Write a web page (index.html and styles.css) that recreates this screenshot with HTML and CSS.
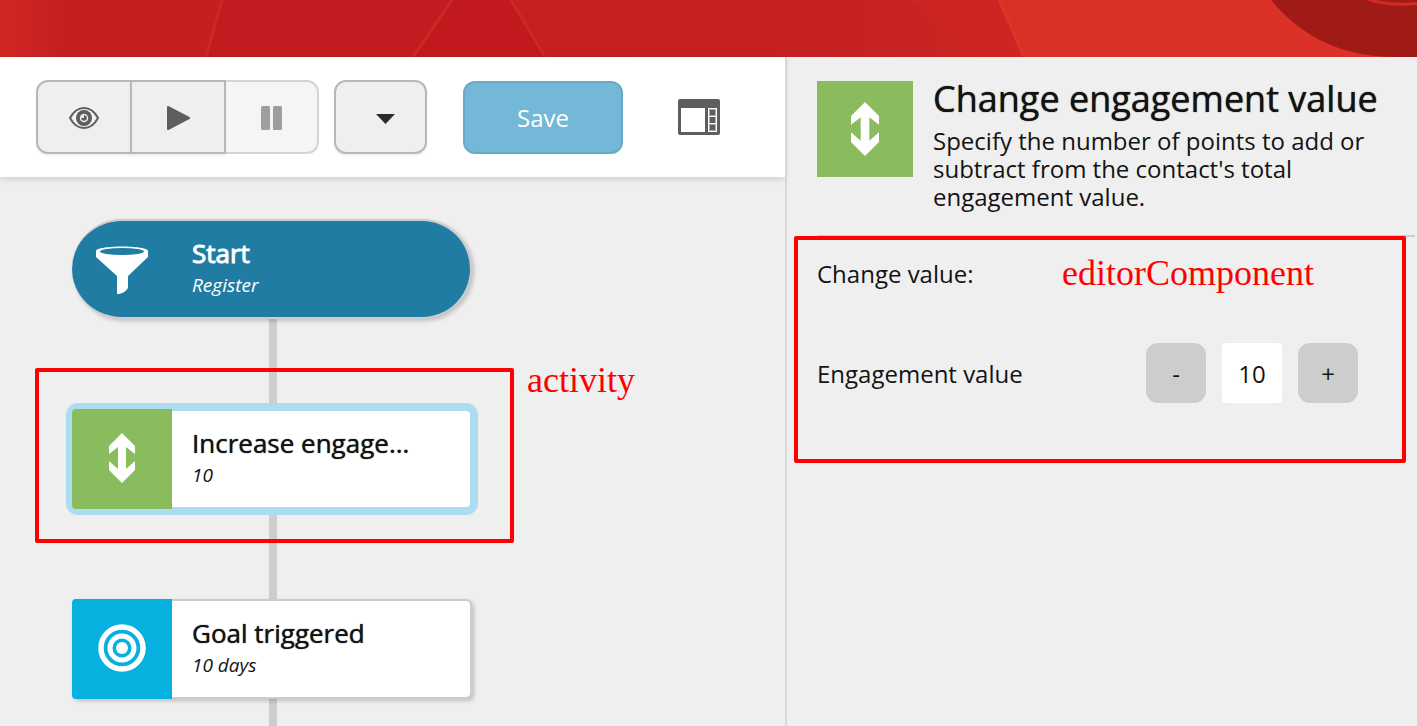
FILE: index.html
```html
<!DOCTYPE html>
<html lang="en">
<head>
<meta charset="utf-8">
<title>Campaign designer</title>
<link rel="stylesheet" href="styles.css">
</head>
<body>
<header class="banner">
  <svg class="banner-art" viewBox="0 0 1417 57" preserveAspectRatio="none" aria-hidden="true">
    <defs>
      <linearGradient id="g1"><stop offset="0" stop-color="#d02724"/><stop offset=".3" stop-color="#c41f20"/><stop offset="1" stop-color="#c42021"/></linearGradient>
      <linearGradient id="g2"><stop offset="0" stop-color="#c51f22"/><stop offset="1" stop-color="#c62021"/></linearGradient>
      <linearGradient id="g3"><stop offset="0" stop-color="#d83127"/><stop offset="1" stop-color="#dd3129"/></linearGradient>
      <linearGradient id="g4"><stop offset="0" stop-color="#c52021"/><stop offset="1" stop-color="#cc2523"/></linearGradient>
    </defs>
    <rect width="1417" height="57" fill="#c41e20"/>
    <path d="M0 0H222L206 57H0z" fill="url(#g1)"/>
    <path d="M222 0H452L413 57H206z" fill="#c31c20"/>
    <path d="M452 0H511L545 57H413z" fill="#c1191e"/>
    <path d="M511 0H1000L1025 57H545z" fill="url(#g2)"/>
    <path d="M800 0H1000L1025 57H811z" fill="url(#g4)"/>
    <path d="M910 0H1000L1025 57H978z" fill="#cc2523"/>
    <path d="M999 0H1417V57H1024z" fill="url(#g3)"/>
    <path d="M222 0L206 57M452 0L413 57M511 0L545 57" fill="none" stroke="#cb2a24" stroke-width="3"/>
    <path d="M999 0L1024 57" stroke="#e33525" stroke-width="2.500"/>
    <path d="M1271 0Q1318 57 1395 57H1417V0z" fill="#a01b15"/>
    <path d="M1366 0Q1387 8 1417 5V0z" fill="#d32a24"/>
    <path d="M1376 0Q1392 4 1417 2V0z" fill="#a01b15"/>
  </svg>
</header>
<div class="workspace">
  <main class="designer">
    <div class="toolbar">
      <div class="button-group">
        <button class="tool" type="button" aria-label="Preview">
          <svg width="30" height="26" viewBox="0 0 30 26"><path d="M1 14C5 6.500 10 4 15 4s10 2.500 14 10c-4 7.500-9 10-14 10S5 21.500 1 14z" fill="#f2f2f2" stroke="#5e5e5e" stroke-width="2"/><circle cx="15" cy="14" r="8" fill="#5e5e5e"/><circle cx="15" cy="14" r="3.500" fill="#5e5e5e" stroke="#e8e8e8" stroke-width="1.500"/><path d="M12 11h3v3h-3z" fill="#e8e8e8"/></svg>
        </button>
        <button class="tool" type="button" aria-label="Start">
          <svg width="24" height="26" viewBox="0 0 24 26"><path d="M2 3L23 14 2 25z" fill="#5e5e5e" stroke="#5e5e5e" stroke-width="2" stroke-linejoin="round"/></svg>
        </button>
        <button class="tool" type="button" aria-label="Pause" disabled>
          <svg width="22" height="26" viewBox="0 0 22 26"><rect y="2" width="9" height="24" rx="1.500" fill="#5e5e5e"/><rect x="12" y="2" width="9" height="24" rx="1.500" fill="#5e5e5e"/></svg>
        </button>
      </div>
      <button class="tool tool-menu" type="button" aria-label="More actions">
        <svg width="20" height="14" viewBox="0 0 20 14"><path d="M0 4H19L9.500 14z" fill="#2b2b2b"/></svg>
      </button>
      <button class="save" type="button">Save</button>
      <button class="toggle" type="button" aria-label="Toggle panel">
        <svg width="42" height="36" viewBox="0 0 42 36"><rect width="42" height="36" rx="2" fill="#5e5e5e"/><path d="M3 9h24v24H3zM30 9h9v24h-9z" fill="#fff"/><path d="M31 10h7v7h-7zM31 18h7v6h-7zM31 25h7v7h-7z" fill="#aaa"/><path d="M32 11h5v5h-5zM32 18h5v6h-5zM32 26h5v5h-5z" fill="#5e5e5e"/></svg>
      </button>
    </div>
    <div class="flow">
      <article class="node node-start">
        <div class="node-icon">
          <svg width="52" height="54" viewBox="0 0 52 54"><path d="M0 9C0 3 52 3 52 9v6L32 34v12q-4 6-11 6V34L0 15z" fill="#fff"/><ellipse cx="26" cy="9.500" rx="22" ry="3.500" fill="#207ca2"/></svg>
        </div>
        <div class="node-text"><h2 class="node-title node-title-strong">Start</h2><p class="node-detail">Register</p></div>
      </article>
      <div class="connector"></div>
      <article class="node node-selected">
        <div class="node-icon node-icon-green">
          <svg width="26" height="52" viewBox="0 0 26 52"><path d="M13 0L26 13V21L17 14V36L26 28V37L13 50 0 37V28L9 36V14L0 21V13z" fill="#fff"/></svg>
        </div>
        <div class="node-text"><h2 class="node-title">Increase engage...</h2><p class="node-detail">10</p></div>
        <div class="callout callout-activity"><span class="callout-label">activity</span></div>
      </article>
      <div class="connector"></div>
      <article class="node">
        <div class="node-icon node-icon-blue">
          <svg width="48" height="50" viewBox="0 0 48 50"><g fill="none" stroke="#fff"><circle cx="24" cy="24" r="21" stroke-width="5.500"/><circle cx="24" cy="24" r="12" stroke-width="5"/></g><circle cx="24" cy="24" r="6" fill="#fff"/></svg>
        </div>
        <div class="node-text"><h2 class="node-title">Goal triggered</h2><p class="node-detail">10 days</p></div>
      </article>
      <div class="connector connector-last"></div>
    </div>
  </main>
  <aside class="panel">
    <div class="panel-head">
      <div class="panel-icon">
        <svg width="28" height="54" viewBox="0 0 26 50"><path d="M13 0L26 13V21L17 14V36L26 28V37L13 50 0 37V28L9 36V14L0 21V13z" fill="#fff"/></svg>
      </div>
      <div class="panel-intro">
        <h1 class="panel-title">Change engagement value</h1>
        <p class="panel-desc">Specify the number of points to add or subtract from the contact's total engagement value.</p>
      </div>
    </div>
    <div class="editor">
      <p class="editor-heading">Change value:</p>
      <div class="editor-row">
        <label class="editor-label" for="points">Engagement value</label>
        <div class="stepper">
          <button class="step" type="button">-</button>
          <input class="step-value" id="points" type="text" value="10">
          <button class="step" type="button">+</button>
        </div>
      </div>
      <div class="callout callout-editor"><span class="callout-label">editorComponent</span></div>
    </div>
  </aside>
</div>
</body>
</html>
```
FILE: styles.css
```css
* { box-sizing: border-box; }
body {
  margin: 0;
  min-height: 100vh;
  display: flex;
  flex-direction: column;
  overflow: hidden;
  background: #efefef;
  color: #131313;
  font-family: "Open Sans", sans-serif;
  font-size: 24px;
}
h1, h2, p { margin: 0; }
button, input { font: inherit; color: inherit; }
svg { display: block; }

.banner { height: 57px; background: #c41e20; }
.banner-art { width: 100%; height: 100%; }

.workspace { flex: 1; display: flex; }
.designer { flex: 1; min-width: 0; }

.toolbar {
  display: flex;
  align-items: center;
  height: 120px;
  padding-left: 36px;
  background: #fff;
  box-shadow: 0 2px 6px rgba(0, 0, 0, .15);
}
.button-group { display: flex; }
.tool {
  display: flex;
  align-items: center;
  justify-content: center;
  width: 96px;
  height: 74px;
  padding: 0;
  border: 2px solid #b8b8b8;
  background: #efefef;
  box-shadow: 0 2px 2px rgba(0, 0, 0, .06);
}
.tool + .tool { margin-left: -2px; }
.tool:first-child { border-radius: 12px 0 0 12px; }
.tool:nth-child(2) { z-index: 1; }
.tool:disabled {
  width: 95px;
  border-radius: 0 12px 12px 0;
  opacity: .6;
  box-shadow: none;
}
.toolbar > .tool-menu {
  width: 93px;
  margin-left: 15px;
  padding-left: 10px;
  border-radius: 12px;
}
.save {
  width: 160px;
  height: 73px;
  margin-left: 36px;
  border: 2px solid #6ca9c4;
  border-radius: 12px;
  background: #73b8d6;
  color: #fff;
}
.toggle { margin-left: 55px; padding: 0; border: 0; background: none; }

.flow { padding: 42px 72px 0; }
.node {
  position: relative;
  display: flex;
  width: 400px;
  height: 100px;
  border: 2px solid #ccc;
  border-left: 0;
  border-radius: 6px;
  background: #fff;
  box-shadow: 2px 2px 4px rgba(0, 0, 0, .2);
}
.node-icon {
  display: flex;
  align-items: center;
  justify-content: center;
  width: 100px;
  height: 100px;
  margin-top: -2px;
  border-radius: 4px 0 0 4px;
}
.node-icon-green { background: #8abc5e; }
.node-icon-blue { background: #06b0df; }
.node-text { flex: 1; padding: 12px 20px; }
.node-title { font-size: 26px; line-height: 40px; font-weight: 400; text-shadow: 0 0 1px currentColor; }
.node-title-strong { -webkit-text-stroke: 1px; text-shadow: none; }
.node-detail { font-size: 19px; line-height: 24px; font-style: italic; }
.node-start { border-radius: 50px; background: #207ca2; color: #fff; }
.node-selected { border-color: #abdcef; box-shadow: 0 0 0 6px #abdcef; }
.connector { width: 8px; height: 90px; margin-left: 197px; background: #cdcdcd; }
.connector-last { height: 27px; }

.panel { width: 632px; border-left: 2px solid #d8d8d8; padding: 24px 2px 0 30px; }
.panel-head {
  display: flex;
  gap: 20px;
  height: 156px;
  padding-right: 30px;
  border-bottom: 2px solid #ccc;
}
.panel-icon {
  flex: none;
  display: flex;
  align-items: center;
  justify-content: center;
  width: 96px;
  height: 96px;
  background: #8abc5e;
}
.panel-title { font-size: 36px; line-height: 36px; font-weight: 400; white-space: nowrap; text-shadow: 0 0 1px currentColor; }
.panel-desc { margin-top: 10px; line-height: 28px; }

.editor { position: relative; padding: 20px 57px 60px 0; }
.editor-heading { line-height: 34px; }
.editor-row { display: flex; align-items: center; justify-content: space-between; margin-top: 52px; }
.stepper { display: flex; gap: 16px; }
.step {
  width: 60px;
  height: 60px;
  padding: 0;
  border: 0;
  border-radius: 12px;
  background: #cdcdcd;
}
.step-value {
  width: 60px;
  height: 60px;
  padding: 0;
  border: 0;
  border-radius: 4px;
  background: #fff;
  text-align: center;
}

.callout {
  position: absolute;
  border: 4px solid #f00;
  border-radius: 2px;
  color: #f00;
  font-family: "Liberation Serif", serif;
  font-size: 36px;
  line-height: 40px;
  pointer-events: none;
}
.callout-label { position: absolute; }
.callout-activity { left: -37px; top: -43px; width: 479px; height: 175px; }
.callout-activity .callout-label { left: 488px; top: -12px; }
.callout-editor { left: -23px; right: 9px; top: -1px; height: 227px; }
.callout-editor .callout-label { left: 264px; top: 13px; }
```
